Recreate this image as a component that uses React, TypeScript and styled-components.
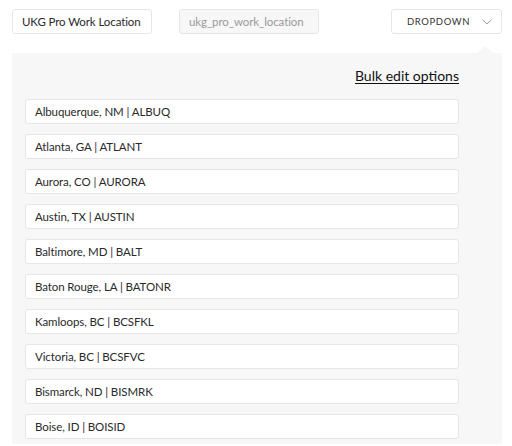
import styled, { createGlobalStyle } from "styled-components";

const GlobalStyle = createGlobalStyle`
  body {
    margin: 0;
    background: #ffffff;
    font-family: Lato, "Open Sans", sans-serif;
    color: #222;
  }
`;

const locations = [
  "Albuquerque, NM | ALBUQ",
  "Atlanta, GA | ATLANT",
  "Aurora, CO | AURORA",
  "Austin, TX | AUSTIN",
  "Baltimore, MD | BALT",
  "Baton Rouge, LA | BATONR",
  "Kamloops, BC | BCSFKL",
  "Victoria, BC | BCSFVC",
  "Bismarck, ND | BISMRK",
  "Boise, ID | BOISID",
];

const App: React.FC = () => {
  return (
    <Page>
      <GlobalStyle />
      <Toolbar>
        <TextField defaultValue="UKG Pro Work Location" />
        <TextField $muted placeholder="ukg_pro_work_location" disabled />
        <DropdownButton>
          DROPDOWN
          <svg width="10" height="6" viewBox="0 0 10 6" fill="none">
            <path d="M0.5 0.8l4.5 4.2 4.5-4.2" stroke="#999" strokeWidth="1" />
          </svg>
        </DropdownButton>
      </Toolbar>
      <Panel>
        <BulkRow>
          <BulkLink href="#">Bulk edit options</BulkLink>
        </BulkRow>
        <OptionList>
          {locations.map((loc) => (
            <OptionInput key={loc} defaultValue={loc} />
          ))}
        </OptionList>
      </Panel>
    </Page>
  );
};

const Page = styled.div`
  width: 512px;
  height: 446px;
  overflow: hidden;
`;

const Toolbar = styled.div`
  display: flex;
  align-items: center;
  padding: 9px 10px 0 12px;
  gap: 27px;
`;

const TextField = styled.input<{ $muted?: boolean }>`
  box-sizing: border-box;
  width: 140px;
  height: 25px;
  padding: 0 8px 0 9px;
  border: 1px solid #e6e6e6;
  border-radius: 3px;
  background: ${(p) => (p.$muted ? "#f7f7f7" : "#fff")};
  font-family: inherit;
  font-size: 11.5px;
  letter-spacing: -0.1px;
  color: #2a2a2a;
  outline: none;

  &::placeholder {
    color: #9a9a9a;
  }
`;

const DropdownButton = styled.button`
  box-sizing: border-box;
  margin-left: auto;
  width: 111px;
  height: 25px;
  display: flex;
  align-items: center;
  gap: 12px;
  padding: 0 0 0 15px;
  border: 1px solid #e6e6e6;
  border-radius: 3px;
  background: #fff;
  font-family: inherit;
  font-size: 9.5px;
  letter-spacing: 0.6px;
  color: #333;
`;

const Panel = styled.div`
  position: relative;
  margin: 19px 10px 0 12px;
  padding: 14px 43px 0 13px;
  height: 391px;
  box-sizing: border-box;
  background: #f7f7f7;

  &::before {
    content: "";
    position: absolute;
    top: -7px;
    right: 9px;
    border-left: 8px solid transparent;
    border-right: 8px solid transparent;
    border-bottom: 7px solid #f7f7f7;
  }
`;

const BulkRow = styled.div`
  display: flex;
  justify-content: flex-end;
  height: 18px;
  margin-bottom: 14px;
`;

const BulkLink = styled.a`
  font-size: 14px;
  color: #111;
  text-decoration: underline;
  text-underline-offset: 2px;
`;

const OptionList = styled.div`
  display: flex;
  flex-direction: column;
  gap: 10px;
`;

const OptionInput = styled.input`
  box-sizing: border-box;
  width: 100%;
  height: 25px;
  padding: 0 9px;
  border: 1px solid #e6e6e6;
  border-radius: 3px;
  background: #fff;
  font-family: inherit;
  font-size: 11.5px;
  letter-spacing: -0.1px;
  color: #2a2a2a;
  outline: none;
`;

export default App;
